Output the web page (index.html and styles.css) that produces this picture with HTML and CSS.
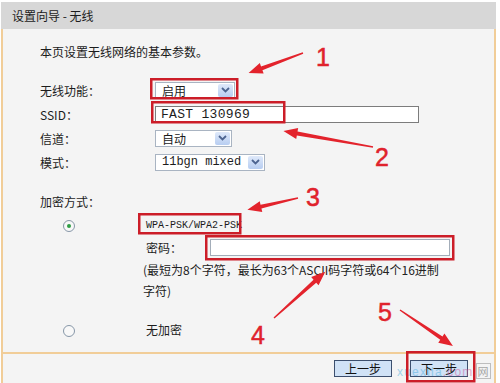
FILE: index.html
```html
<!DOCTYPE html>
<html lang="zh-CN">
<head>
    <meta charset="UTF-8">
    <title>设置向导 - 无线</title>
    <link rel="stylesheet" href="styles.css">
</head>
<body>
    <div class="page">
        <div class="head">设置向导 - 无线</div>
        <div class="panel">
            <div class="content">
                <p class="intro">本页设置无线网络的基本参数。</p>
                <div class="form">
                    <div class="label">无线功能：</div>
                    <div class="select sel-enable"><span class="val">启用</span><i class="drop"><svg width="9" height="6" viewBox="0 0 9 6"><path d="M1 1l3.5 3.5L8 1" stroke="#4d6490" stroke-width="1.8" fill="none"/></svg></i></div>
                    <div class="label">SSID：</div>
                    <div class="input ssid">FAST 130969</div>
                    <div class="label">信道：</div>
                    <div class="select sel-channel"><span class="val">自动</span><i class="drop"><svg width="9" height="6" viewBox="0 0 9 6"><path d="M1 1l3.5 3.5L8 1" stroke="#4d6490" stroke-width="1.8" fill="none"/></svg></i></div>
                    <div class="label">模式：</div>
                    <div class="select sel-mode"><span class="val mono">11bgn mixed</span><i class="drop"><svg width="9" height="6" viewBox="0 0 9 6"><path d="M1 1l3.5 3.5L8 1" stroke="#4d6490" stroke-width="1.8" fill="none"/></svg></i></div>
                </div>
                <p class="sec">加密方式：</p>
                <div class="opt">
                    <span class="radio on"></span>
                    <div class="opt-body">
                        <div class="mode">WPA-PSK/WPA2-PSK</div>
                        <div class="pw"><span class="pw-label">密码：</span><span class="input pw-input"></span></div>
                        <p class="note">(最短为8个字符，最长为63个ASCII码字符或64个16进制字符)</p>
                    </div>
                </div>
                <div class="opt opt-none">
                    <span class="radio"></span>
                    <div class="opt-body">无加密</div>
                </div>
            </div>
            <div class="foot">
                <button class="btn">上一步</button>
                <button class="btn">下一步</button>
            </div>
        </div>
    </div>

    <div class="watermark"><span class="wm-a">xuexila</span><span class="wm-b">.com</span><span class="wm-box">网</span></div>

    <svg class="marks" width="500" height="383" viewBox="0 0 500 383">
        <g class="boxes">
            <rect x="151.25" y="79.25" width="86" height="19"/>
            <rect x="152.25" y="102.25" width="132" height="20"/>
            <rect x="139.25" y="214.25" width="101" height="19"/>
            <rect x="206.25" y="236.25" width="247" height="23"/>
            <rect x="407.25" y="352.25" width="67" height="29"/>
        </g>
        <g class="arrows">
            <polygon transform="translate(303 53) rotate(159.7)" points="0,-0.7 44,-2 44,-5.5 58,0 44,5.5 44,2 0,0.7"/>
            <polygon transform="translate(373 147) rotate(190.1)" points="0,-0.7 77,-2 77,-5.5 91,0 77,5.5 77,2 0,0.7"/>
            <polygon transform="translate(298 198) rotate(166.8)" points="0,-0.7 38,-2 38,-5.5 52,0 38,5.5 38,2 0,0.7"/>
            <polygon transform="translate(274 318) rotate(-42)" points="0,-0.7 55,-2 55,-5.5 69,0 55,5.5 55,2 0,0.7"/>
            <polygon transform="translate(400 310) rotate(34.2)" points="0,-0.7 50,-2 50,-5.5 64,0 50,5.5 50,2 0,0.7"/>
        </g>
        <g class="nums">
            <text x="323" y="66">1</text>
            <text x="382" y="166">2</text>
            <text x="313" y="206">3</text>
            <text x="258" y="344">4</text>
            <text x="385" y="321">5</text>
        </g>
    </svg>
</body>
</html>
```

FILE: styles.css
```css
body { margin: 0; width: 500px; height: 383px; overflow: hidden; position: relative; background: #fff; font-family: "Noto Sans CJK SC", "Noto Sans", sans-serif; font-size: 12px; color: #1c1c1c; }
p { margin: 0; }

.page { width: 495px; margin: 2px 0 0 1px; }
.head { height: 27px; line-height: 27px; padding-left: 11px; background: #d7d7d7; }
.panel { background: #f4f4f4; border: 2px solid #f1cd98; border-top: 0; }
.content { height: 323px; padding: 15px 0 0 37px; box-sizing: border-box; }

.intro { line-height: 16px; }
.form { display: grid; grid-template-columns: 115px auto; grid-auto-rows: 24px; align-items: center; justify-items: start; margin-top: 18px; }

/* fake XP style selects */
.select { display: flex; align-items: center; height: 17px; background: #fff; border: 1px solid #a9b4c2; box-sizing: border-box; }
.select .val { flex: 1; padding-left: 6px; line-height: 15px; }
.select .drop { width: 15px; height: 13px; margin-right: 1px; border-radius: 2px; background: linear-gradient(#dfe9fa, #b7cdf1); display: flex; align-items: center; justify-content: center; }
.sel-enable { width: 80px; }
.sel-channel { width: 77px; }
.sel-mode { width: 110px; }
.mono { font-family: "Liberation Mono", monospace; font-size: 12px; }

.input { display: block; height: 17px; background: #fff; box-sizing: border-box; }
.ssid { width: 264px; border: 1px solid #7c7c7c; padding-left: 5px; font-family: "Liberation Mono", monospace; font-size: 13px; line-height: 15px; letter-spacing: 0.3px; }

.sec { margin-top: 20px; line-height: 16px; }

.opt { display: flex; margin-top: 6px; }
.opt-none { margin-top: 20px; line-height: 18px; }
.radio { width: 12px; height: 12px; margin: 4px 71px 0 23px; border: 1px solid #8797a8; border-radius: 50%; box-sizing: border-box; background: #f8f8f8; display: flex; align-items: center; justify-content: center; flex: none; }
.radio.on::after { content: ""; width: 4px; height: 4px; border-radius: 50%; background: #2f9e45; }

.mode { height: 20px; line-height: 20px; font-family: "Liberation Mono", monospace; font-size: 10px; }
.pw { display: flex; align-items: center; height: 20px; margin-top: 1px; }
.pw-label { width: 64px; }
.pw-input { width: 240px; border: 1px solid #a3adb9; }
.note { width: 300px; margin: 2px 0 0 -3px; line-height: 21px; color: #222; }

.foot { height: 23px; border-top: 2px solid #f1cd98; display: flex; justify-content: flex-end; align-items: flex-start; gap: 18px; padding: 6px 26px 0 0; box-sizing: content-box; }
.btn { width: 58px; height: 17px; padding: 0; margin: 0; font: 12px "Noto Sans CJK SC", sans-serif; line-height: 15px; color: #111; background: #d0e2f6; border: 1px solid #3c4f6e; }

.watermark { position: absolute; left: 397px; top: 363px; font: 12px/16px "Liberation Sans", sans-serif; letter-spacing: 1.2px; opacity: 0.5; }
.wm-a { color: #4fb0df; }
.wm-b { color: #d0579a; }
.wm-box { display: inline-block; margin-left: 2px; padding: 0 1px; border: 1px solid #8a8a8a; font: 11px/14px "Noto Sans CJK SC", sans-serif; letter-spacing: 0; color: #555; }

.marks { position: absolute; left: 0; top: 0; pointer-events: none; }
.boxes rect { fill: none; stroke: #cc1d28; stroke-width: 2.5; }
.arrows polygon { fill: #e3232c; }
.nums text { font: 25px "Liberation Sans", sans-serif; fill: #e0222c; stroke: #e0222c; stroke-width: 0.5; text-anchor: middle; }
```
